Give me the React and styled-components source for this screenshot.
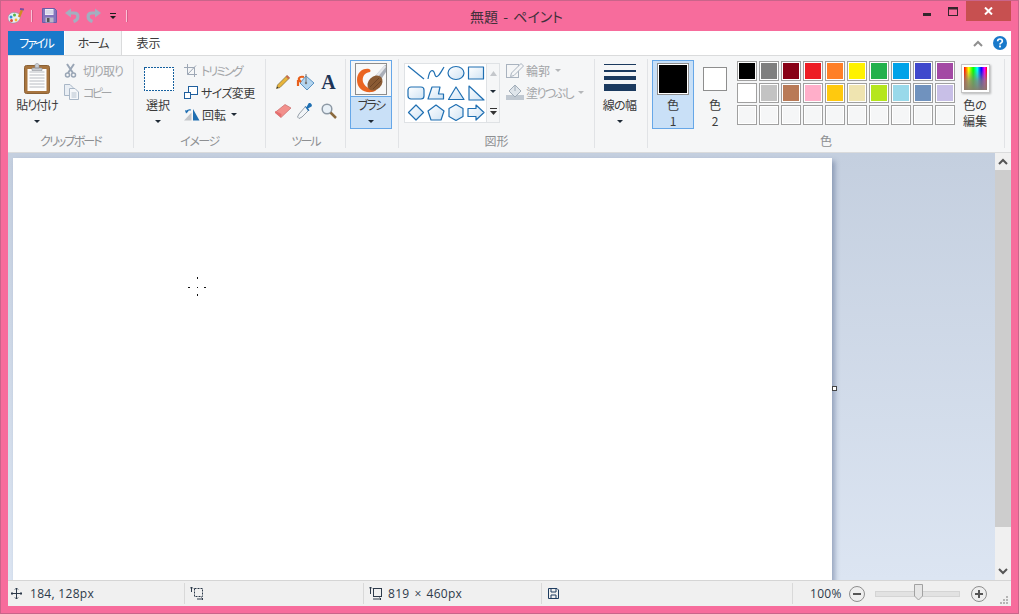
import React from "react";
import styled, { createGlobalStyle } from "styled-components";

const GlobalStyle = createGlobalStyle`
  html, body {
    margin: 0;
    padding: 0;
    overflow: hidden;
    background: #f76c9c;
  }
`;

const Window = styled.div`
  box-sizing: border-box;
  width: 1019px;
  height: 614px;
  padding: 0 7px 7px;
  display: flex;
  flex-direction: column;
  background: #f76c9c;
  border: 1px solid #c9648a;
  font-family: "Noto Sans CJK JP", "Liberation Sans", sans-serif;
  font-size: 12px;
  font-feature-settings: "palt";
  color: #3b3b3b;
`;

const HiddenDefs = styled.svg`
  position: absolute;
`;

const TitleBar = styled.div`
  position: relative;
  height: 30px;
  flex: none;
  display: flex;
  align-items: flex-start;
`;

const QuickBar = styled.div`
  display: flex;
  align-items: center;
  height: 29px;
`;

const QuickIcon = styled.svg`
  display: block;
  flex: none;
  margin-left: ${(p) => p.$ml || 0}px;
`;

const QuickSep = styled.div`
  width: 1px;
  height: 12px;
  background: #fbc2d6;
  border-right: 1px solid #d65c88;
  margin-left: ${(p) => p.$ml}px;
`;

const Title = styled.div`
  position: absolute;
  left: 14px;
  right: 0;
  top: 5px;
  text-align: center;
  font-size: 14px;
  line-height: 20px;
  word-spacing: 2px;
  color: #40303a;
`;

const WinControls = styled.div`
  margin-left: auto;
  display: flex;
  align-items: flex-start;
`;

const WinButton = styled.div`
  box-sizing: border-box;
  width: ${(p) => p.$w}px;
  height: 20px;
  padding-top: ${(p) => p.$pt}px;
  display: flex;
  align-items: flex-start;
  justify-content: center;
  background: ${(p) => p.$bg || "transparent"};
`;

const TabRow = styled.div`
  height: 24px;
  flex: none;
  display: flex;
  align-items: stretch;
  background: #fff;
`;

const Tab = styled.div`
  box-sizing: border-box;
  width: ${(p) => p.$w}px;
  padding-bottom: 2px;
  display: flex;
  align-items: center;
  justify-content: center;
  letter-spacing: ${(p) => p.$ls || 0}px;
  color: ${(p) => (p.$file ? "#fff" : "#3b3b3b")};
  background: ${(p) => (p.$file ? "#1979ca" : p.$active ? "#f5f6f7" : "#fff")};
  border-right: ${(p) => (p.$active ? "1px solid #dadbdc" : "none")};
  margin-left: ${(p) => p.$ml || 0}px;
`;

const TabTools = styled.div`
  margin-left: auto;
  display: flex;
  align-items: center;
  gap: 10px;
  padding-right: 4px;
`;

const Ribbon = styled.div`
  height: 98px;
  flex: none;
  box-sizing: border-box;
  padding: 3px 0 4px;
  display: flex;
  background: #f5f6f7;
  border-top: 1px solid #dadbdc;
  border-bottom: 1px solid #dadbdc;
`;

const Group = styled.div`
  box-sizing: border-box;
  width: ${(p) => p.$w}px;
  flex: none;
  display: flex;
  flex-direction: column;
  border-right: 1px solid #e1e3e6;
`;

const GroupBody = styled.div`
  height: 71px;
  padding-top: 1px;
  box-sizing: border-box;
  display: flex;
  align-items: flex-start;
`;

const GroupLabel = styled.div`
  padding-top: 5px;
  line-height: 14px;
  text-align: center;
  white-space: nowrap;
  letter-spacing: ${(p) => p.$ls || 0}px;
  color: #8d8f92;
`;

const LargeButton = styled.div`
  box-sizing: border-box;
  width: ${(p) => p.$w}px;
  height: 69px;
  margin-left: ${(p) => p.$ml || 0}px;
  flex: none;
  display: flex;
  flex-direction: column;
  align-items: center;
  background: ${(p) => (p.$selected ? "#c9e0f7" : "transparent")};
  outline: ${(p) => (p.$selected ? "1px solid #66a7e8" : "none")};
  outline-offset: -1px;
`;

const IconSlot = styled.div`
  height: 37px;
  align-self: stretch;
  flex: none;
  display: flex;
  align-items: center;
  justify-content: center;
  box-sizing: border-box;
  padding-left: ${(p) => p.$pl || 0}px;
  background: ${(p) => (p.$plain ? "#f5f6f7" : "transparent")};
  outline: ${(p) => (p.$plain ? "1px solid #66a7e8" : "none")};
  outline-offset: -1px;
`;

const ButtonText = styled.div`
  height: 16px;
  line-height: 16px;
  white-space: nowrap;
  letter-spacing: ${(p) => p.$ls || 0}px;
  color: #3b3b3b;
`;

const CaretLine = styled.div`
  height: 16px;
  display: flex;
  align-items: center;
  justify-content: center;
`;

const Caret = styled.span`
  display: inline-block;
  width: 0;
  height: 0;
  border-left: 3px solid transparent;
  border-right: 3px solid transparent;
  border-top: 3px solid ${(p) => (p.$dim ? "#b5b7ba" : "#1f2a36")};
  margin-left: ${(p) => p.$ml || 0}px;
`;

const SmallColumn = styled.div`
  display: flex;
  flex-direction: column;
  margin: -1px 0 0 ${(p) => p.$ml || 0}px;
`;

const SmallRow = styled.div`
  height: 22px;
  display: grid;
  grid-template-columns: ${(p) => p.$slot}px auto auto;
  align-items: center;
  justify-content: start;
  white-space: nowrap;
  color: ${(p) => (p.$dim ? "#a3a5a8" : "#3b3b3b")};
`;

const RowText = styled.span`
  letter-spacing: ${(p) => p.$ls || 0}px;
`;

const ToolGrid = styled.div`
  display: grid;
  grid-template-columns: 22px 22px 25px;
  grid-auto-rows: 29px;
  margin: 7px 0 0 6px;
  justify-items: center;
  align-items: center;
`;

const TextTool = styled.span`
  font-family: "Liberation Serif", serif;
  font-weight: bold;
  font-size: 20px;
  line-height: 20px;
  color: #1d3557;
`;

const Gallery = styled.div`
  margin: 3px 0 0 5px;
  height: 60px;
  width: 96px;
  box-sizing: border-box;
  flex: none;
  display: flex;
  border: 1px solid #dfe2e5;
  background: #fff;
`;

const ShapeGrid = styled.div`
  width: 81px;
  padding-left: 1px;
  box-sizing: border-box;
  display: grid;
  grid-template-columns: repeat(4, 20px);
  grid-auto-rows: 19.4px;
  justify-items: center;
  align-items: center;
`;

const GalleryScroll = styled.div`
  flex: 1;
  display: flex;
  flex-direction: column;
  align-items: center;
  justify-content: space-around;
  background: #f5f6f7;
  border-left: 1px solid #dfe2e5;
`;

const LineStack = styled.div`
  width: 32px;
  margin-bottom: 2px;
  display: flex;
  flex-direction: column;
`;

const WidthLine = styled.div`
  height: ${(p) => p.$h}px;
  margin-bottom: ${(p) => p.$gap}px;
  background: #1b3a5f;
`;

const ColorFrame = styled.div`
  box-sizing: border-box;
  width: ${(p) => p.$size}px;
  height: ${(p) => p.$size}px;
  border: 1px solid #8e8e8e;
  padding: 1px;
  background: #fff;
`;

const ColorFill = styled.div`
  width: 100%;
  height: 100%;
  background: ${(p) => p.$color};
`;

const Palette = styled.div`
  margin: 1px 0 0 1px;
  display: grid;
  grid-template-columns: repeat(10, 20px);
  grid-auto-rows: 20px;
  gap: 2px;
`;

const Swatch = styled.div`
  box-sizing: border-box;
  border: 1px solid #a0a0a0;
  padding: 1px;
  background: #fff;
`;

const SwatchFill = styled.div`
  height: 100%;
  background: ${(p) => p.$color};
`;

const EditPreview = styled.div`
  box-sizing: border-box;
  width: 29px;
  height: 29px;
  padding: 2px;
  background: #fff;
  border: 1px solid #c4c4c4;
  box-shadow: 1px 1px 2px rgba(0, 0, 0, 0.25);
`;

const Rainbow = styled.div`
  height: 100%;
  background: linear-gradient(to bottom, rgba(135, 130, 120, 0) 12%, rgba(135, 130, 120, 0.75) 60%, rgba(135, 125, 110, 0.95) 100%),
    linear-gradient(to right, #f00, #ff0 20%, #0f0 40%, #0ff 58%, #00f 75%, #f0f 90%, #f00);
`;

const Main = styled.div`
  flex: 1;
  min-height: 0;
  display: flex;
`;

const Workspace = styled.div`
  flex: 1;
  min-width: 0;
  overflow: hidden;
  padding: 5px 0 0 5px;
  background: linear-gradient(to bottom, #c4cfdf, #dce5f2);
`;

const Canvas = styled.div`
  position: relative;
  width: 819px;
  height: 460px;
  background: #fff;
  box-shadow: 3px 3px 5px rgba(70, 90, 130, 0.45);
`;

const CursorMark = styled.svg`
  position: absolute;
  left: 175px;
  top: 119px;
`;

const ResizeHandle = styled.div`
  position: absolute;
  left: 819px;
  top: 228px;
  width: 5px;
  height: 5px;
  box-sizing: border-box;
  background: #fff;
  border: 1px solid #444;
`;

const ScrollBar = styled.div`
  width: 16px;
  flex: none;
  display: flex;
  flex-direction: column;
  background: #f0f0f0;
`;

const ScrollArrow = styled.div`
  height: 17px;
  flex: none;
  display: flex;
  align-items: center;
  justify-content: center;
`;

const ScrollThumb = styled.div`
  height: 357px;
  flex: none;
  background: #cdcdcd;
`;

const ScrollSpace = styled.div`
  flex: 1;
`;

const StatusBar = styled.div`
  height: 26px;
  flex: none;
  box-sizing: border-box;
  display: flex;
  align-items: center;
  background: #f0f0f0;
  border-top: 1px solid #d5d5d5;
  font-family: "Open Sans", "Liberation Sans", sans-serif;
  letter-spacing: 0.3px;
  color: #2d3a4a;
`;

const StatusCell = styled.div`
  box-sizing: border-box;
  width: ${(p) => p.$w}px;
  height: 21px;
  flex: none;
  display: flex;
  align-items: center;
  gap: ${(p) => p.$gap || 0}px;
  padding-left: ${(p) => p.$pl || 0}px;
  border-right: 1px solid #d9d9d9;
`;

const SizeText = styled.span`
  word-spacing: 1.5px;
`;

const ZoomArea = styled.div`
  flex: 1;
  display: flex;
  align-items: center;
  position: relative;
  height: 100%;
`;

const ZoomValue = styled.span`
  margin-left: 17px;
  width: 39px;
  flex: none;
`;

const SliderTrack = styled.div`
  position: relative;
  box-sizing: border-box;
  width: 85px;
  height: 6px;
  margin: 0 11px 0 10px;
  flex: none;
  background: #e2e2e2;
  border: 1px solid #d4d4d4;
`;

const SliderThumb = styled.svg`
  position: absolute;
  left: 38px;
  top: -8px;
`;

const Grip = styled.svg`
  position: absolute;
  right: 3px;
  bottom: 2px;
`;

const Shape = ({ children }) => (
  <svg width="20" height="19" viewBox="0 0 20 19">
    <g fill="url(#shapeFill)" stroke="#1f6fb2" strokeWidth="1.2" strokeLinejoin="round">
      {children}
    </g>
  </svg>
);

const swatches = [
  "#000000", "#7f7f7f", "#880015", "#ed1c24", "#ff7f27", "#fff200", "#22b14c", "#00a2e8", "#3f48cc", "#a349a4",
  "#ffffff", "#c3c3c3", "#b97a57", "#ffaec9", "#ffc90e", "#efe4b0", "#b5e61d", "#99d9ea", "#7092be", "#c8bfe7",
];

const shapes = [
  <path key="line" d="M2 2 L18 15" fill="none" />,
  <path key="curve" d="M2 15 C4 3 8 6 9 11 C11 16 15 8 18 3" fill="none" />,
  <ellipse key="oval" cx="10" cy="9" rx="8" ry="6.5" />,
  <rect key="rect" x="2.5" y="3" width="15" height="12" />,
  <rect key="round" x="2" y="3" width="16" height="12" rx="3" />,
  <path key="poly" d="M6 3 H14 L12.5 10 H17.5 V15 H2 Z" />,
  <path key="tri" d="M10 3 L18 15.5 H2.5 Z" />,
  <path key="rtri" d="M3 2 L18 16 H3 Z" />,
  <path key="diamond" d="M10 2 L17.5 9.5 L10 17 L2.5 9.5 Z" />,
  <path key="pent" d="M10 2 L18 8 L15 17 H5 L2 8 Z" />,
  <path key="hex" d="M10 1.5 L17 5.5 V13.5 L10 17.5 L3 13.5 V5.5 Z" />,
  <path key="arrow" d="M2 5.5 H10 V2 L18 9.5 L10 17 V13.5 H2 Z" />,
];

export default function App() {
  return (
    <>
      <GlobalStyle />
      <HiddenDefs width="0" height="0">
        <defs>
          <linearGradient id="shapeFill" x1="0" y1="0" x2="1" y2="1">
            <stop offset="0" stopColor="#ffffff" />
            <stop offset="1" stopColor="#cfe3f4" />
          </linearGradient>
        </defs>
      </HiddenDefs>
      <Window>
        <TitleBar>
          <QuickBar>
            <QuickIcon width="16" height="16" viewBox="0 0 16 16">
              <path d="M0 10 C0 6 4 4 7 4.500 C11 5 13 7 12 10.500 C11 14 7 15.500 4 15 C1.500 14.500 0 12.500 0 10 Z" fill="#e8eef4" stroke="#8a8f9a" strokeWidth=".6" />
              <circle cx="3" cy="9" r="1.500" fill="#2f8fd8" />
              <circle cx="6.500" cy="7" r="1.500" fill="#58b447" />
              <circle cx="3.500" cy="12.500" r="1.500" fill="#e24a3b" />
              <circle cx="8" cy="12" r="1.400" fill="#f2b632" />
              <path d="M14 2 L11 9" stroke="#d08a22" strokeWidth="2.400" />
              <path d="M12 1 L16 1.500" stroke="#7a4ca0" strokeWidth="1.800" />
            </QuickIcon>
            <QuickSep $ml={7} />
            <QuickIcon $ml={9} width="15" height="15" viewBox="0 0 15 15">
              <path d="M0.500 0.500 H12.500 L14.500 2.500 V14.500 H0.500 Z" fill="#8574bd" stroke="#6a5ca6" />
              <rect x="3" y="1" width="8.500" height="6" fill="#eeeef6" />
              <path d="M3.500 3 H11 M3.500 5 H11" stroke="#c5c3dc" />
              <rect x="3.500" y="9.500" width="8" height="5" fill="#b9b7c8" />
              <rect x="5" y="10" width="2.500" height="4" fill="#555" />
            </QuickIcon>
            <QuickIcon $ml={8} width="15" height="15" viewBox="0 0 15 15">
              <path d="M0 5 L6 0.500 V9.500 Z" fill="#a3afc0" />
              <path d="M4 5 H9 C14 5 14.500 11.500 8.500 13.500" fill="none" stroke="#a3afc0" strokeWidth="3.200" />
            </QuickIcon>
            <QuickIcon $ml={6} width="15" height="15" viewBox="0 0 15 15">
              <path d="M15 5 L9 0.500 V9.500 Z" fill="#a3afc0" />
              <path d="M11 5 H6 C1 5 .5 11.500 6.500 13.500" fill="none" stroke="#a3afc0" strokeWidth="3.200" />
            </QuickIcon>
            <QuickIcon $ml={8} width="8" height="8" viewBox="0 0 8 8">
              <path d="M1 1.500 H7" stroke="#1d1d1d" strokeWidth="1" />
              <path d="M1 4 H7 L4 7 Z" fill="#1d1d1d" />
            </QuickIcon>
            <QuickSep $ml={9} />
          </QuickBar>
          <Title>無題 - ペイント</Title>
          <WinControls>
            <WinButton $w={26} $pt={12}>
              <svg width="8" height="3" viewBox="0 0 8 3"><rect width="8" height="3" fill="#33262c" /></svg>
            </WinButton>
            <WinButton $w={26} $pt={6}>
              <svg width="10" height="9" viewBox="0 0 10 9">
                <rect x=".5" y=".5" width="9" height="8" fill="none" stroke="#33262c" />
                <rect width="10" height="2.500" fill="#33262c" />
              </svg>
            </WinButton>
            <WinButton $w={45} $pt={6} $bg="#c75050">
              <svg width="9" height="8" viewBox="0 0 9 8">
                <path d="M1 .5 L8 7.500 M8 .5 L1 7.500" stroke="#fff" strokeWidth="2" />
              </svg>
            </WinButton>
          </WinControls>
        </TitleBar>

        <TabRow>
          <Tab $file $w={56} $ls={-2}>ファイル</Tab>
          <Tab $active $w={57} $ml={1} $ls={-1.3}>ホーム</Tab>
          <Tab $w={53}>表示</Tab>
          <TabTools>
            <svg width="10" height="7" viewBox="0 0 10 7">
              <path d="M1 6 L5 2 L9 6" fill="none" stroke="#8f8f8f" strokeWidth="2" />
            </svg>
            <svg width="14" height="14" viewBox="0 0 15 15">
              <circle cx="7.500" cy="7.500" r="7.500" fill="#1979ca" />
              <path d="M5 5.500 C5 2.500 10 2.500 10 5.500 C10 7.500 7.500 7.200 7.500 9" fill="none" stroke="#fff" strokeWidth="1.800" />
              <rect x="6.500" y="10.200" width="2" height="2" fill="#fff" />
            </svg>
          </TabTools>
        </TabRow>

        <Ribbon>
          <Group $w={126}>
            <GroupBody>
              <LargeButton $w={50} $ml={4}>
                <IconSlot>
                  <svg width="26" height="31" viewBox="0 0 26 31">
                    <rect x=".5" y="2.500" width="25" height="28" rx="2" fill="#a8753f" stroke="#8a6136" />
                    <rect x="3.500" y="6" width="19" height="22" fill="#fdfdfd" />
                    <path d="M5.500 9 H20.500 M5.500 12 H20.500 M5.500 15 H20.500 M5.500 18 H20.500 M5.500 21 H20.500 M5.500 24 H20.500" stroke="#b9bcc2" />
                    <path d="M8 5 H18 V7.500 H8 Z M11 2 C11 0 15 0 15 2 V5 H11 Z" fill="#c9ccd2" stroke="#8f9299" strokeWidth=".6" />
                  </svg>
                </IconSlot>
                <ButtonText $ls={-1}>貼り付け</ButtonText>
                <CaretLine><Caret /></CaretLine>
              </LargeButton>
              <SmallColumn $ml={2}>
                <SmallRow $slot={19} $dim>
                  <svg width="14" height="15" viewBox="0 0 14 15">
                    <path d="M3 1 L9 10 M10 1 L4 10" stroke="#9aa6b6" strokeWidth="2" fill="none" />
                    <circle cx="3.500" cy="12" r="2" fill="none" stroke="#9aa6b6" strokeWidth="1.500" />
                    <circle cx="9.500" cy="12" r="2" fill="none" stroke="#9aa6b6" strokeWidth="1.500" />
                  </svg>
                  <RowText $ls={-1}>切り取り</RowText>
                </SmallRow>
                <SmallRow $slot={19} $dim>
                  <svg width="15" height="16" viewBox="0 0 15 16">
                    <path d="M.5 .5 H6 L9 3.500 V11.500 H.5 Z" fill="#e9eef4" stroke="#a9b7c7" />
                    <path d="M5.500 4.500 H11 L14.500 8 V15.500 H5.500 Z" fill="#f5f7fa" stroke="#a9b7c7" />
                    <path d="M7.500 9 H12.500 M7.500 11 H12.500 M7.500 13 H12.500" stroke="#b6c2cf" />
                  </svg>
                  <RowText $ls={-2.5}>コピー</RowText>
                </SmallRow>
              </SmallColumn>
            </GroupBody>
            <GroupLabel $ls={-1.9}>クリップボード</GroupLabel>
          </Group>

          <Group $w={132}>
            <GroupBody>
              <LargeButton $w={48}>
                <IconSlot $pl={1}>
                  <svg width="30" height="24" viewBox="0 0 30 24" shapeRendering="crispEdges">
                    <rect x=".5" y=".5" width="29" height="23" fill="#fff" stroke="#15609f" strokeDasharray="2 1" />
                  </svg>
                </IconSlot>
                <ButtonText>選択</ButtonText>
                <CaretLine><Caret /></CaretLine>
              </LargeButton>
              <SmallColumn $ml={2}>
                <SmallRow $slot={17} $dim>
                  <svg width="14" height="13" viewBox="0 0 14 13">
                    <path d="M3.500 0 V10.500 H13 M0 3.500 H10.500 V13" fill="none" stroke="#9da7b5" />
                    <path d="M3.500 10.500 L12 1.500" stroke="#9da7b5" />
                  </svg>
                  <RowText $ls={-2}>トリミング</RowText>
                </SmallRow>
                <SmallRow $slot={17}>
                  <svg width="14" height="13" viewBox="0 0 14 13">
                    <rect x="4.500" y=".5" width="9" height="8" fill="#fff" stroke="#1f5f9e" />
                    <rect x=".5" y="6.500" width="6" height="6" fill="#fff" stroke="#1f5f9e" />
                  </svg>
                  <RowText $ls={-0.6}>サイズ変更</RowText>
                </SmallRow>
                <SmallRow $slot={18}>
                  <svg width="16" height="13" viewBox="0 0 16 13">
                    <path d="M9 1 L15.500 12.500 H9 Z" fill="#1f6fb2" />
                    <path d="M0 12.500 L7.500 4.500 V12.500 Z" fill="#c3c6ca" />
                    <path d="M2 4 C3 2 5 1.500 7 2" fill="none" stroke="#1f6fb2" strokeWidth="1.200" />
                    <path d="M1 2 L2 5.500 L4.500 3.500 Z" fill="#1f6fb2" />
                  </svg>
                  <RowText>回転</RowText>
                  <Caret $ml={5} />
                </SmallRow>
              </SmallColumn>
            </GroupBody>
            <GroupLabel $ls={-1.5}>イメージ</GroupLabel>
          </Group>

          <Group $w={80}>
            <GroupBody>
              <ToolGrid>
                <svg width="16" height="16" viewBox="0 0 16 16">
                  <path d="M12 1.500 L14.500 4 L5 13.500 L1.500 14.500 L2.500 11 Z" fill="#e8b43a" stroke="#7a6a3a" strokeWidth=".7" />
                  <path d="M11.500 2 L14 4.500" stroke="#c96a50" strokeWidth="2" />
                  <path d="M1.500 14.500 L2.300 12.500 L3.500 13.700 Z" fill="#333" />
                </svg>
                <svg width="19" height="18" viewBox="0 0 19 18">
                  <path d="M10 3 L18 10 L11 17 L4 10 Z" fill="#b4d5ef" stroke="#5b93c4" />
                  <path d="M10 1 V9" stroke="#777" />
                  <circle cx="10" cy="10" r="1.200" fill="#777" />
                  <path d="M5 9 C1 6 3 3 8 4 M2 7 V13" fill="none" stroke="#e8601c" strokeWidth="2.200" />
                </svg>
                <TextTool>A</TextTool>
                <svg width="18" height="16" viewBox="0 0 18 16">
                  <path d="M1 9.500 L11 1.500 L17 5 L7 14.500 Z" fill="#f2908c" stroke="#c76a6a" strokeWidth=".7" />
                  <path d="M1 9.500 L7 14.500 L7.500 11 L1.500 8 Z" fill="#e56f6f" />
                </svg>
                <svg width="16" height="17" viewBox="0 0 16 17">
                  <path d="M8.500 4.500 L12 8 L5 15 L2 16.500 L.5 15 L2 12 Z" fill="#f2f5f8" stroke="#7f8a95" strokeWidth=".8" />
                  <path d="M7.500 4 L9.500 5 L11.500 1.500 C13 0 16 3 14.500 4.500 L11 6.500 L12.500 8.500 L11 9 Z" fill="#1f6fb2" />
                </svg>
                <svg width="16" height="16" viewBox="0 0 16 16">
                  <circle cx="6" cy="6" r="4.800" fill="#e8f0f7" stroke="#8d99a5" strokeWidth="1.500" />
                  <path d="M9.500 9.500 L15 15" stroke="#8a6a3f" strokeWidth="2.500" />
                </svg>
              </ToolGrid>
            </GroupBody>
            <GroupLabel $ls={-2}>ツール</GroupLabel>
          </Group>

          <Group $w={53}>
            <GroupBody>
              <LargeButton $w={42} $ml={4} $selected>
                <IconSlot $plain>
                  <svg width="32" height="32" viewBox="0 0 32 32">
                    <rect x=".5" y=".5" width="31" height="31" fill="#f8f8f8" stroke="#8c8c8c" />
                    <path d="M30 2 L20 13 L25 18 L31 9 V2 Z" fill="#a9aeb8" />
                    <path d="M30 2 L20 13 L22 15 L31 4 Z" fill="#e4e6ea" />
                    <path d="M14 6 C7 5 2 10 2 17 C2 25 8 30 17 29 C20 28.500 22 27 21 26 C15 27 10 24 8 19 C7 14 9 10 15 9 C16 8 15.500 6.500 14 6 Z" fill="#ea6420" />
                    <ellipse cx="20" cy="20" rx="8.500" ry="6.500" fill="#8a5a33" transform="rotate(-45 20 20)" />
                    <path d="M15 24 L24 15 M18 26 L26 18" stroke="#6e4526" />
                  </svg>
                </IconSlot>
                <ButtonText $ls={-1.7}>ブラシ</ButtonText>
                <CaretLine><Caret /></CaretLine>
              </LargeButton>
            </GroupBody>
            <GroupLabel>&nbsp;</GroupLabel>
          </Group>

          <Group $w={196}>
            <GroupBody>
              <Gallery>
                <ShapeGrid>
                  {shapes.map((s) => (
                    <Shape key={s.key}>{s}</Shape>
                  ))}
                </ShapeGrid>
                <GalleryScroll>
                  <svg width="7" height="5" viewBox="0 0 7 5"><path d="M3.500 0 L7 5 H0 Z" fill="#c4c7cb" /></svg>
                  <Caret />
                  <svg width="7" height="7" viewBox="0 0 7 7">
                    <path d="M0 .5 H7" stroke="#333" />
                    <path d="M0 3 H7 L3.500 7 Z" fill="#333" />
                  </svg>
                </GalleryScroll>
              </Gallery>
              <SmallColumn $ml={6}>
                <SmallRow $slot={20} $dim>
                  <svg width="18" height="15" viewBox="0 0 18 15">
                    <rect x=".5" y="1.500" width="12" height="13" fill="none" stroke="#a9b3bf" />
                    <path d="M15 .5 L17.500 3 L8 12.500 L4.500 13.500 L5.500 10 Z" fill="#f5f6f7" stroke="#a9b3bf" />
                  </svg>
                  <RowText>輪郭</RowText>
                  <Caret $dim $ml={5} />
                </SmallRow>
                <SmallRow $slot={20} $dim>
                  <svg width="18" height="16" viewBox="0 0 18 16">
                    <rect x="0" y="11" width="18" height="5" fill="#c0c8d1" />
                    <path d="M9 1 L15 7 L9 13 L3 7 Z" fill="#dfe5eb" stroke="#a0acb8" />
                    <path d="M9 1 V7" stroke="#a0acb8" />
                  </svg>
                  <RowText $ls={-1.6}>塗りつぶし</RowText>
                  <Caret $dim $ml={5} />
                </SmallRow>
              </SmallColumn>
            </GroupBody>
            <GroupLabel>図形</GroupLabel>
          </Group>

          <Group $w={53}>
            <GroupBody>
              <LargeButton $w={49}>
                <IconSlot $pl={1}>
                  <LineStack>
                    <WidthLine $h={1} $gap={5} />
                    <WidthLine $h={2} $gap={4} />
                    <WidthLine $h={4} $gap={4} />
                    <WidthLine $h={7} $gap={0} />
                  </LineStack>
                </IconSlot>
                <ButtonText $ls={-0.7}>線の幅</ButtonText>
                <CaretLine><Caret /></CaretLine>
              </LargeButton>
            </GroupBody>
            <GroupLabel>&nbsp;</GroupLabel>
          </Group>

          <Group $w={357}>
            <GroupBody>
              <LargeButton $w={42} $ml={4} $selected>
                <IconSlot>
                  <ColorFrame $size={32}><ColorFill $color="#000" /></ColorFrame>
                </IconSlot>
                <ButtonText>色</ButtonText>
                <ButtonText>1</ButtonText>
              </LargeButton>
              <LargeButton $w={42}>
                <IconSlot>
                  <ColorFrame $size={24}><ColorFill $color="#fff" /></ColorFrame>
                </IconSlot>
                <ButtonText>色</ButtonText>
                <ButtonText>2</ButtonText>
              </LargeButton>
              <Palette>
                {swatches.map((c, i) => (
                  <Swatch key={i}><SwatchFill $color={c} /></Swatch>
                ))}
                {Array.from({ length: 10 }, (_, i) => (
                  <Swatch key={`empty-${i}`}><SwatchFill $color="#f5f6f7" /></Swatch>
                ))}
              </Palette>
              <LargeButton $w={40}>
                <IconSlot>
                  <EditPreview><Rainbow /></EditPreview>
                </IconSlot>
                <ButtonText>色の</ButtonText>
                <ButtonText>編集</ButtonText>
              </LargeButton>
            </GroupBody>
            <GroupLabel>色</GroupLabel>
          </Group>
        </Ribbon>

        <Main>
          <Workspace>
            <Canvas>
              <CursorMark width="18" height="20" viewBox="0 0 18 20" fill="#111">
                <rect x="9" y="0" width="1" height="2" />
                <rect x="9" y="17" width="1" height="2" />
                <rect x="0" y="10" width="2" height="1" />
                <rect x="16" y="10" width="2" height="1" />
                <rect x="9" y="10" width="1" height="1" />
              </CursorMark>
              <ResizeHandle />
            </Canvas>
          </Workspace>
          <ScrollBar>
            <ScrollArrow>
              <svg width="10" height="7" viewBox="0 0 10 7"><path d="M1 6 L5 2 L9 6" fill="none" stroke="#555" strokeWidth="2" /></svg>
            </ScrollArrow>
            <ScrollThumb />
            <ScrollSpace />
            <ScrollArrow>
              <svg width="10" height="7" viewBox="0 0 10 7"><path d="M1 1 L5 5 L9 1" fill="none" stroke="#555" strokeWidth="2" /></svg>
            </ScrollArrow>
          </ScrollBar>
        </Main>

        <StatusBar>
          <StatusCell $w={177} $pl={3} $gap={8}>
            <svg width="11" height="11" viewBox="0 0 11 11">
              <path d="M5.500 0 V11 M0 5.500 H11 M4 1.500 L5.500 0 L7 1.500 M4 9.500 L5.500 11 L7 9.500 M1.500 4 L0 5.500 L1.500 7 M9.500 4 L11 5.500 L9.500 7" fill="none" stroke="#2d3a4a" />
            </svg>
            <span>184, 128px</span>
          </StatusCell>
          <StatusCell $w={179} $pl={5}>
            <svg width="14" height="13" viewBox="0 0 14 13">
              <path d="M1.500 0 V5 M0 1.500 L1.500 0 L3 1.500 M7 12 H13 M11.500 10.500 L13 12 L11.500 13.500" fill="none" stroke="#2d3a4a" />
              <rect x="4.500" y="1.500" width="8" height="8" fill="none" stroke="#2d3a4a" strokeDasharray="2 1" />
            </svg>
          </StatusCell>
          <StatusCell $w={178} $pl={5} $gap={5}>
            <svg width="14" height="13" viewBox="0 0 14 13">
              <path d="M1.500 0 V7 M0 1.500 L1.500 0 L3 1.500 M4 12 H12 M10.500 10.500 L12 12 L10.500 13.500" fill="none" stroke="#2d3a4a" />
              <rect x="4.500" y="1.500" width="8" height="8" fill="none" stroke="#2d3a4a" />
            </svg>
            <SizeText>819 × 460px</SizeText>
          </StatusCell>
          <StatusCell $w={251} $pl={6}>
            <svg width="11" height="11" viewBox="0 0 11 11">
              <path d="M.5 .5 H9 L10.500 2 V10.500 H.5 Z" fill="none" stroke="#1f3d60" />
              <path d="M3 .5 V4 H8 V.5 M3 10.500 V7 H8 V10.500" fill="none" stroke="#1f3d60" />
            </svg>
          </StatusCell>
          <ZoomArea>
            <ZoomValue>100%</ZoomValue>
            <svg width="16" height="16" viewBox="0 0 16 16">
              <circle cx="8" cy="8" r="7.500" fill="#eee" stroke="#8e8e8e" />
              <rect x="4" y="7" width="8" height="2" fill="#555" />
            </svg>
            <SliderTrack>
              <SliderThumb width="9" height="17" viewBox="0 0 9 17">
                <path d="M.5 .5 H8.500 V12 L4.500 16 L.5 12 Z" fill="#e6e6e6" stroke="#a2a2a2" />
              </SliderThumb>
            </SliderTrack>
            <svg width="16" height="16" viewBox="0 0 16 16">
              <circle cx="8" cy="8" r="7.500" fill="#eee" stroke="#8e8e8e" />
              <path d="M4 7 H7 V4 H9 V7 H12 V9 H9 V12 H7 V9 H4 Z" fill="#555" />
            </svg>
            <Grip width="8" height="8" viewBox="0 0 8 8" fill="#b5b5b5">
              <rect x="6" y="0" width="2" height="2" />
              <rect x="3" y="3" width="2" height="2" />
              <rect x="6" y="3" width="2" height="2" />
              <rect x="0" y="6" width="2" height="2" />
              <rect x="3" y="6" width="2" height="2" />
              <rect x="6" y="6" width="2" height="2" />
            </Grip>
          </ZoomArea>
        </StatusBar>
      </Window>
    </>
  );
}
